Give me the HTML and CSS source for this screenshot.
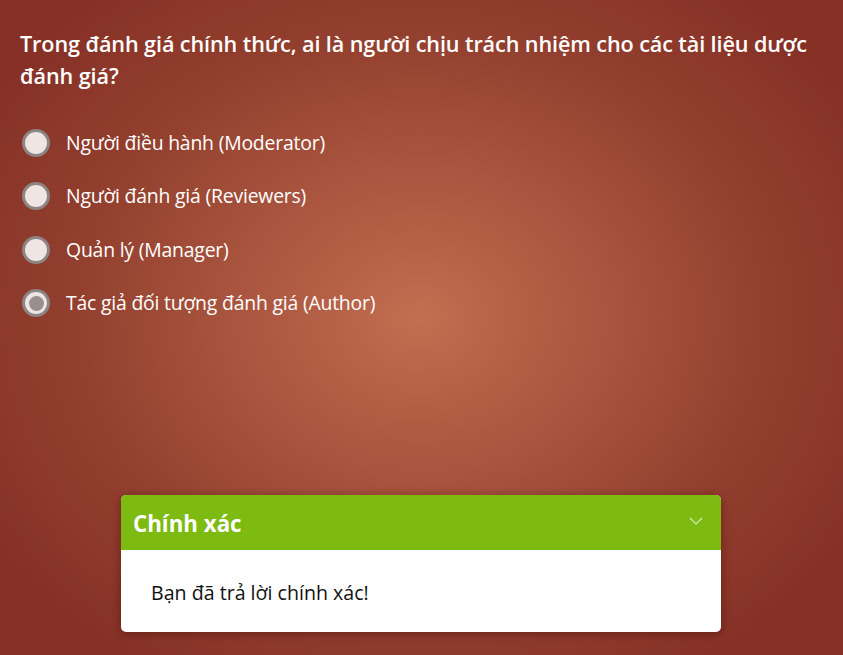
FILE: index.html
```html
<!DOCTYPE html>
<html lang="vi">
<head>
<meta charset="utf-8">
<link rel="stylesheet" href="styles.css">
</head>
<body>
<div class="stage">
  <h1 class="question">Trong đánh giá chính thức, ai là người chịu trách nhiệm cho các tài liệu dược đánh giá?</h1>
  <ul class="options">
    <li class="option"><span class="radio"></span><span class="label">Người điều hành (Moderator)</span></li>
    <li class="option"><span class="radio"></span><span class="label">Người đánh giá (Reviewers)</span></li>
    <li class="option"><span class="radio"></span><span class="label">Quản lý (Manager)</span></li>
    <li class="option"><span class="radio checked"></span><span class="label">Tác giả đối tượng đánh giá (Author)</span></li>
  </ul>
  <div class="feedback">
    <div class="fb-head">
      <span class="fb-title">Chính xác</span>
      <svg class="chev" width="14" height="8" viewBox="0 0 14 8"><path d="M1 1 L7 7 L13 1" fill="none" stroke="#d8ecb8" stroke-width="1.2"/></svg>
    </div>
    <div class="fb-body">Bạn đã trả lời chính xác!</div>
  </div>
</div>
</body>
</html>
```
FILE: styles.css
```css
html, body {
  margin: 0;
  padding: 0;
}
body {
  width: 843px;
  height: 655px;
  overflow: hidden;
  font-family: "Noto Sans", "Open Sans", sans-serif;
}
.stage {
  width: 843px;
  height: 655px;
  box-sizing: border-box;
  padding: 28px 20px 0 20px;
  background: radial-gradient(ellipse 520px 430px at 420px 318px, #c26e50 0%, #a9553f 35%, #93402f 65%, #852f25 100%);
  display: flex;
  flex-direction: column;
}
.question {
  margin: 0;
  color: #ffffff;
  font-family: "Open Sans", sans-serif;
  font-weight: 600;
  font-size: 21.6px;
  line-height: 32px;
  letter-spacing: -0.1px;
}
.options {
  list-style: none;
  margin: 35px 0 0 0;
  padding: 0;
  display: flex;
  flex-direction: column;
  gap: 22.6px;
}
.option {
  display: flex;
  align-items: center;
  height: 31px;
  gap: 16px;
}
.radio {
  width: 28px;
  height: 28px;
  border-radius: 50%;
  border: 3px solid #8c8583;
  background: #efe6e4;
  box-sizing: border-box;
  margin-left: 2px;
  display: flex;
  align-items: center;
  justify-content: center;
}
.radio.checked::after {
  content: "";
  width: 15px;
  height: 15px;
  border-radius: 50%;
  background: #989090;
}
.label {
  color: #ffffff;
  font-family: "Open Sans", sans-serif;
  font-size: 19.4px;
  letter-spacing: -0.2px;
  margin-top: -1px;
}
.feedback {
  margin: 176px 0 0 101px;
  width: 600px;
  border-radius: 5px;
  overflow: hidden;
  box-shadow: 0 2px 10px rgba(60, 10, 0, 0.45);
  background: #ffffff;
}
.fb-head {
  height: 55px;
  background: #7dba12;
  display: flex;
  align-items: center;
  justify-content: space-between;
  padding: 0 18px 0 12px;
}
.fb-title {
  color: #ffffff;
  font-family: "Open Sans", sans-serif;
  font-weight: 700;
  font-size: 22.3px;
  margin-top: 2px;
}
.chev {
  margin-top: -3px;
}
.fb-body {
  height: 82px;
  box-sizing: border-box;
  padding: 29px 30px 0 30px;
  color: #111111;
  font-family: "Open Sans", sans-serif;
  font-size: 19.6px;
}
```
